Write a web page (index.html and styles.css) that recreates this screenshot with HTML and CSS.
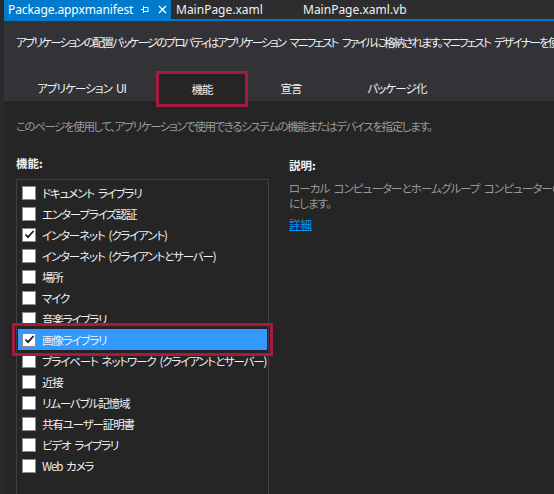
FILE: index.html
```html
<!DOCTYPE html>
<html lang="ja">
<head>
<meta charset="utf-8">
<link rel="stylesheet" href="styles.css">
</head>
<body>
<div class="frame">
  <div class="strip"></div>
  <div class="main">
    <div class="tabbar">
      <div class="doc-tab active">
        <span class="doc-name">Package.appxmanifest</span>
        <svg class="pin" width="9" height="9" viewBox="0 0 9 9"><path d="M0 4.5H2.5M2.5 1V8M2.5 2.5H7V6.5H2.5" fill="none" stroke="#fff" stroke-width="1"/></svg>
        <svg class="close" width="9" height="9" viewBox="0 0 9 9"><path d="M1 1L8 8M8 1L1 8" stroke="#fff" stroke-width="1.4"/></svg>
      </div>
      <div class="doc-tab t2"><span class="doc-name">MainPage.xaml</span></div>
      <div class="doc-tab t3"><span class="doc-name">MainPage.xaml.vb</span></div>
    </div>
    <div class="tabline"></div>
    <div class="header">
      <p class="intro">アプリケーションの配置パッケージのプロパティはアプリケーション マニフェスト ファイルに格納されます。マニフェスト デザイナーを使用して、これらのプロパティを設定または変更します。</p>
      <div class="tabs">
        <div class="tab w1">アプリケーション UI</div>
        <div class="tab w2 selected">機能</div>
        <div class="tab w3">宣言</div>
        <div class="tab w4">パッケージ化</div>
      </div>
    </div>
    <div class="content">
      <p class="hint">このページを使用して、アプリケーションで使用できるシステムの機能またはデバイスを指定します。</p>
      <div class="columns">
        <div class="left">
          <div class="label">機能:</div>
          <ul class="list">
            <li class="item"><span class="cb"></span>ドキュメント ライブラリ</li>
            <li class="item"><span class="cb"></span>エンタープライズ認証</li>
            <li class="item"><span class="cb"><svg width="11" height="11" viewBox="0 0 11 11"><path d="M1.5 5.5L4 8.2L9.5 2" fill="none" stroke="#1e1e1e" stroke-width="1.8"/></svg></span>インターネット (クライアント)</li>
            <li class="item"><span class="cb"></span>インターネット (クライアントとサーバー)</li>
            <li class="item"><span class="cb"></span>場所</li>
            <li class="item"><span class="cb"></span>マイク</li>
            <li class="item"><span class="cb"></span>音楽ライブラリ</li>
            <li class="item sel"><span class="cb"><svg width="11" height="11" viewBox="0 0 11 11"><path d="M1.5 5.5L4 8.2L9.5 2" fill="none" stroke="#1e1e1e" stroke-width="1.8"/></svg></span>画像ライブラリ</li>
            <li class="item"><span class="cb"></span>プライベート ネットワーク (クライアントとサーバー)</li>
            <li class="item"><span class="cb"></span>近接</li>
            <li class="item"><span class="cb"></span>リムーバブル記憶域</li>
            <li class="item"><span class="cb"></span>共有ユーザー証明書</li>
            <li class="item"><span class="cb"></span>ビデオ ライブラリ</li>
            <li class="item"><span class="cb"></span>Web カメラ</li>
          </ul>
        </div>
        <div class="right">
          <div class="label">説明:</div>
          <p class="desc">ローカル コンピューターとホームグループ コンピューターの画像ライブラリへのアクセスを可能<br>にします。</p>
          <a class="more" href="#">詳細</a>
        </div>
      </div>
    </div>
  </div>
</div>
</body>
</html>
```
FILE: styles.css
```css
* { box-sizing: border-box; }
html, body { margin: 0; padding: 0; }
body {
  width: 554px;
  height: 494px;
  overflow: hidden;
  background: #252526;
  font-family: "Noto Sans CJK JP", "Noto Sans", sans-serif;
  font-size: 11.5px;
  color: #f1f1f1;
}
.intro, .tab, .hint, .item, .desc, .label, .more {
  font-feature-settings: "palt";
  letter-spacing: -0.9px;
  word-spacing: 2.5px;
}
.intro { letter-spacing: -1.8px; word-spacing: 3.5px; }
.hint { letter-spacing: -1.4px; word-spacing: 3px; }
.item { letter-spacing: -1.15px; word-spacing: 2.5px; }
.frame { display: flex; height: 494px; }
.strip { width: 4px; background: #2a2a2c; flex: none; }
.main { flex: 1; min-width: 0; display: flex; flex-direction: column; overflow: hidden; }

.tabbar { height: 19px; background: #2d2d30; display: flex; flex: none; }
.doc-tab { height: 19px; display: flex; align-items: center; white-space: nowrap; }
.doc-name { font-family: "Noto Sans", sans-serif; font-size: 12px; line-height: 19px; }
.doc-tab.active { background: #007acc; width: 167px; padding-left: 4px; color: #fff; }
.doc-tab.active .doc-name { letter-spacing: -0.1px; }
.pin { margin-left: 8px; }
.close { margin-left: 8px; }
.doc-tab.t2 { width: 127px; padding-left: 5px; color: #f1f1f1; }
.doc-tab.t3 { padding-left: 5px; color: #f1f1f1; }
.tabline { height: 2px; background: #007acc; flex: none; }

.header { background: #333337; height: 80px; flex: none; display: flex; flex-direction: column; }
.intro {
  margin: 0;
  padding: 13px 0 0 12px;
  height: 50px;
  line-height: 16px;
  white-space: nowrap;
  color: #f1f1f1;
}
.tabs { display: flex; height: 30px; align-items: flex-start; }
.tab {
  height: 36px;
  display: flex;
  align-items: center;
  justify-content: center;
  color: #f1f1f1;
  padding-bottom: 2px;
  white-space: nowrap;
  flex: none;
}
.tab.w1 { width: 152px; padding-left: 3px; }
.tab.w2 { width: 92px; }
.tab.w3 { width: 86px; }
.tab.w4 { width: 126px; }
.tab.selected {
  background: #252526;
  border: 3px solid #a8193f;
  padding-bottom: 0;
  position: relative;
  z-index: 1;
}

.content { flex: 1; padding-left: 12px; }
.hint {
  margin: 17px 0 0 0;
  line-height: 16px;
  color: #999999;
  white-space: nowrap;
}
.columns { display: flex; }
.left { width: 253px; flex: none; }
.right { margin-left: 20px; white-space: nowrap; }
.label { margin-top: 21px; line-height: 16px; font-weight: bold; color: #f1f1f1; letter-spacing: 0; }
.right .label { margin-top: 23px; }
.list {
  list-style: none;
  margin: 8px 0 0 0;
  padding: 2px 0 40px 0;
  border: 1px solid #3f3f46;
  height: 320px;
}
.item {
  height: 21px;
  display: flex;
  align-items: center;
  padding-left: 5px;
  white-space: nowrap;
  color: #f1f1f1;
}
.item.sel {
  background: #3399ff;
  margin: 0 1px;
  padding-left: 4px;
  outline: 3px solid #a8193f;
  outline-offset: 3px;
}
.cb {
  width: 14px;
  height: 14px;
  background: #ffffff;
  border: 1px solid #8a8a8a;
  margin-right: 6px;
  flex: none;
  display: flex;
  align-items: center;
  justify-content: center;
}
.desc {
  margin: 8px 0 0 0;
  line-height: 15px;
  color: #999999;
}
.more {
  display: inline-block;
  margin-top: 6px;
  color: #0097fb;
  text-decoration: underline;
  line-height: 15px;
  letter-spacing: 0;
}
```
